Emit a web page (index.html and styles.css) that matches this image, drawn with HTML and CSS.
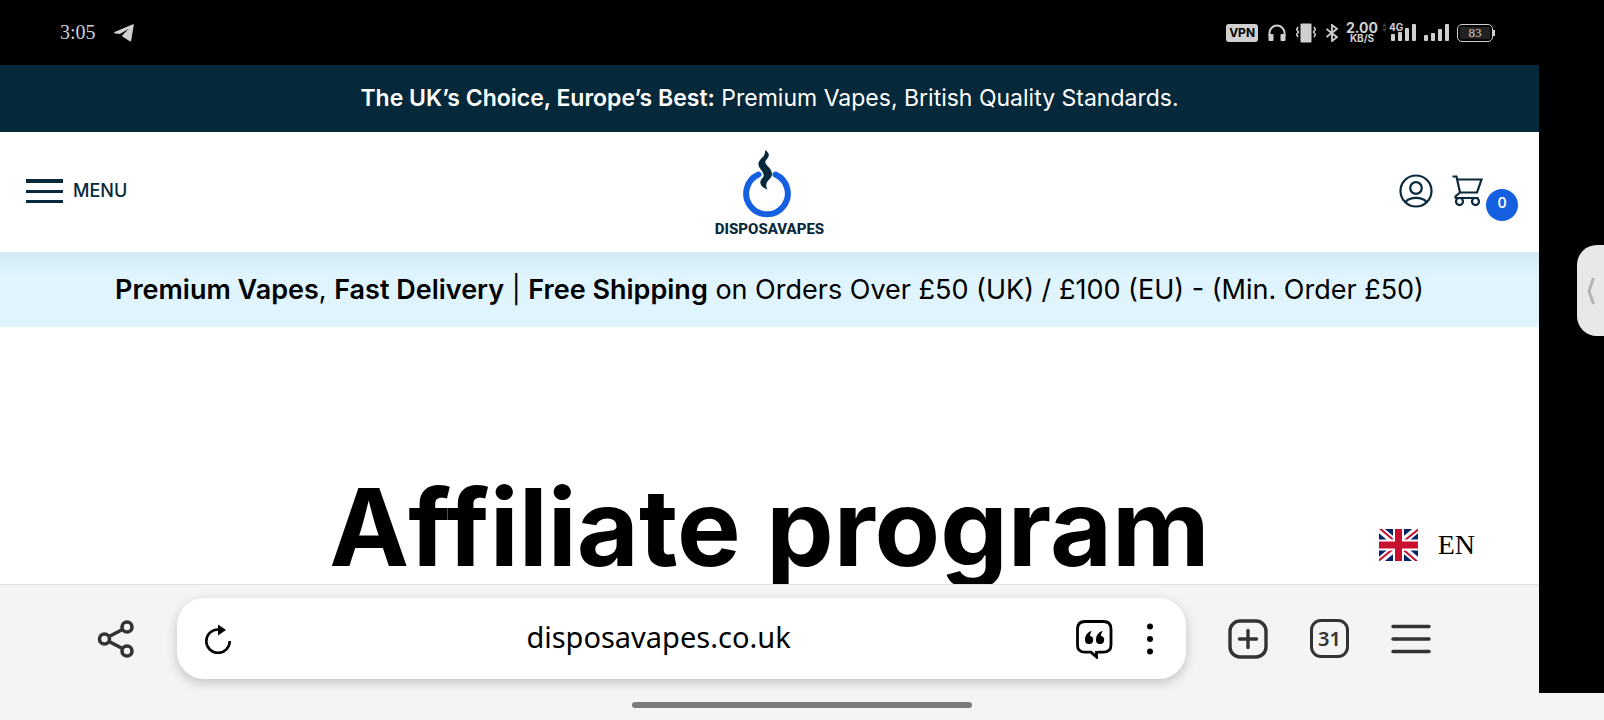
FILE: index.html
```html
<!DOCTYPE html>
<html lang="en">
<head>
    <meta charset="UTF-8">
    <meta name="viewport" content="width=device-width, initial-scale=1.0">
    <title>Affiliate program - Disposavapes</title>
    <link rel="stylesheet" href="styles.css">
</head>
<body>
    <div class="status-bar">
        <div class="status-left">
            <span class="clock">3:05</span>
            <svg width="20" height="18" viewBox="0 0 20 18" fill="#d0d0d0"><path d="M0.5 8 L19 0.3 C19.6 0 20 0.4 19.8 1 L17.2 16.5 C17 17.400 16.200 17.600 15.400 17 L8.400 12.500 C8 12 8.200 11.500 8.600 11 L14.500 5 L5.800 9.900 L1 9.400 C0 9 0 8.300 0.500 8Z"/></svg>
        </div>
        <div class="status-right">
            <div class="status-icons">
                <span class="vpn">VPN</span>
                <svg width="18" height="18" viewBox="0 0 18 18"><path d="M1.500 12V9a7.500 7.500 0 0 1 15 0v3" fill="none" stroke="#d0d0d0" stroke-width="2"/><rect x="0.500" y="10" width="5" height="7" rx="1" fill="#d0d0d0"/><rect x="12.500" y="10" width="5" height="7" rx="1" fill="#d0d0d0"/></svg>
                <svg width="20" height="20" viewBox="0 0 20 20"><rect x="4.500" y="0.500" width="11" height="19" rx="1" fill="#d0d0d0"/><path d="M2 4L0.500 6.500 2.500 9 0.500 11.500 2 14M18 4l1.500 2.500-2 2.500 2 2.500L18 14" fill="none" stroke="#d0d0d0" stroke-width="1.500"/></svg>
                <svg width="12" height="18" viewBox="0 0 12 18" fill="none" stroke="#d0d0d0" stroke-width="1.800"><path d="M0.500 5L11 13.200 6 17V1l5 3.800L0.500 13"/></svg>
            </div>
            <div class="network">
                <div class="speed"><span class="speed-value">2.00</span><span class="speed-unit">KB/S</span></div>
                <svg class="arrows" width="5" height="9" viewBox="0 0 5 9" fill="#3a3a3a"><path d="M0 3.500L2.500 0 5 3.500ZM0 5.500L2.500 9 5 5.500Z"/></svg>
                <div class="signal">
                    <span class="network-type">4G</span>
                    <svg width="25" height="17" viewBox="0 0 25 17" fill="#d0d0d0"><rect x="0" y="10" width="4" height="7" rx="1"/><rect x="7" y="8" width="4" height="9" rx="1"/><rect x="14" y="4" width="4" height="13" rx="1"/><rect x="21" y="0" width="4" height="17" rx="1"/></svg>
                </div>
            </div>
            <svg width="25" height="17" viewBox="0 0 25 17" fill="#d0d0d0"><rect x="0" y="11" width="4" height="6" rx="1"/><rect x="7" y="9" width="4" height="8" rx="1"/><rect x="14" y="5" width="4" height="12" rx="1"/><rect x="21" y="0" width="4" height="17" rx="1"/></svg>
            <div class="battery"><span>83</span></div>
        </div>
    </div>

    <div class="screen">
        <div class="browser">
            <main class="page">
                <div class="promo"><p><strong>The UK’s Choice, Europe’s Best:</strong> Premium Vapes, British Quality Standards.</p></div>
                <header class="header">
                    <button class="menu-btn" type="button">
                        <svg width="37" height="24" viewBox="0 0 37 24" fill="#08283b"><rect width="37" height="4"/><rect y="11" width="37" height="3"/><rect y="21" width="37" height="3"/></svg>
                        MENU
                    </button>
                    <a class="logo" href="#">
                        <svg width="54" height="68" viewBox="0 0 54 68">
                            <path d="M15.500 24.500 A20.800 20.800 0 1 0 32.500 24.500" fill="none" stroke="#1560e0" stroke-width="6" stroke-linecap="round"/>
                            <path d="M22 0 C28 4 26 7 22.500 11 C20.500 14 29 18 29 24 C29 30 20 31 24.500 39.500 C17 37 15.500 32 19.500 28 C24 23 14.500 19 15.500 13.500 C16.500 8 23 7 22 0Z" fill="#08283b"/>
                        </svg>
                        <span>DISPOSAVAPES</span>
                    </a>
                    <div class="header-actions">
                        <a class="account" href="#" aria-label="Account">
                            <svg width="34" height="34" viewBox="0 0 34 34" fill="none" stroke="#08283b" stroke-width="2.200"><circle cx="17" cy="17" r="15.500"/><circle cx="17" cy="14" r="5.800"/><path d="M6.500 28C9 24.700 13 23.800 17 23.800S25 24.700 27.500 28"/></svg>
                        </a>
                        <a class="cart" href="#" aria-label="Cart">
                            <svg width="31" height="31" viewBox="0 0 31 31" fill="none" stroke="#08283b" stroke-width="2.200"><path d="M0.500 1.500H4.500L8 17.500M5.500 4.500H29.500L25 17.500H8L4 21C2.800 22.500 3.500 23 5 23H26.500"/><circle cx="7.500" cy="26.500" r="3.500"/><circle cx="23.500" cy="26.500" r="3.500"/></svg>
                            <span class="cart-count">0</span>
                        </a>
                    </div>
                </header>
                <div class="shipping"><p><strong>Premium Vapes</strong>, <strong>Fast Delivery</strong> | <strong>Free Shipping</strong> on Orders Over £50 (UK) / £100 (EU) - (Min. Order £50)</p></div>
                <h1>Affiliate program</h1>
                <button class="language" type="button">
                    <svg width="39" height="32" viewBox="0 0 39 32">
                        <rect width="39" height="32" fill="#012169"/>
                        <path d="M-2 -2L41 34M41 -2L-2 34" stroke="#fff" stroke-width="7"/>
                        <path d="M-2 -3L19 15M41 -1L20 16M41 35L20 17M-2 33L19 16" stroke="#c8102e" stroke-width="2"/>
                        <path d="M19.500 0V32M0 16H39" stroke="#fff" stroke-width="11"/>
                        <path d="M19.500 0V32M0 16H39" stroke="#c8102e" stroke-width="7"/>
                    </svg>
                    EN
                </button>
            </main>

            <nav class="toolbar">
                <button type="button" aria-label="Share">
                    <svg width="38" height="38" viewBox="0 0 38 38" fill="none" stroke="#333" stroke-width="3.600"><circle cx="7.500" cy="19" r="5"/><circle cx="30" cy="7" r="5"/><circle cx="30" cy="31" r="5"/><path d="M12 16.500L25.500 9.500M12 21.500L25.500 28.500"/></svg>
                </button>
                <div class="address">
                    <button type="button" aria-label="Reload">
                        <svg width="28" height="30" viewBox="0 0 28 30"><path d="M14 5.500A11.700 11.700 0 1 0 25.700 17" fill="none" stroke="#000" stroke-width="2.600"/><path d="M14 0.500L22 6 14 11.500Z"/></svg>
                    </button>
                    <input type="text" value="disposavapes.co.uk" aria-label="Address">
                    <button type="button" aria-label="Reviews">
                        <svg width="38" height="40" viewBox="0 0 38 40"><path d="M23 33.200H28Q36 33.200 36 26V10Q36 2.500 28.500 2.500H10Q2.500 2.500 2.500 10V26Q2.500 33.200 10 33.200H16L21.500 38V32" fill="none" stroke="#000" stroke-width="2.800"/><path d="M17 12C13.500 12.500 10 15.500 10 21A4.100 4.100 0 1 0 15 17C15 14.500 16 13 17 12ZM28 12C24.500 12.500 21 15.500 21 21A4.100 4.100 0 1 0 26 17C26 14.500 27 13 28 12Z"/></svg>
                    </button>
                    <button type="button" aria-label="More">
                        <svg width="6" height="32" viewBox="0 0 6 32"><circle cx="3" cy="3.500" r="3"/><circle cx="3" cy="16" r="3"/><circle cx="3" cy="28.500" r="3"/></svg>
                    </button>
                </div>
                <div class="tools">
                    <button type="button" aria-label="New tab">
                        <svg width="40" height="40" viewBox="0 0 40 40" fill="none" stroke="#333" stroke-width="3.400"><rect x="2" y="2" width="36" height="36" rx="10"/><path d="M11.500 20H28.500M20 11.500V28.500" stroke-linecap="round"/></svg>
                    </button>
                    <button type="button" class="tabs" aria-label="31 open tabs">31</button>
                    <button type="button" aria-label="Browser menu">
                        <svg width="40" height="30" viewBox="0 0 40 30" stroke="#333" stroke-width="3.500" stroke-linecap="round"><path d="M2 2.500H38M2 15H38M2 27.500H38"/></svg>
                    </button>
                </div>
            </nav>
        </div>
        <aside class="edge">
            <button class="handle" type="button" aria-label="Open side panel">
                <svg width="8" height="28" viewBox="0 0 8 28" fill="none" stroke="#b5b5b5" stroke-width="3"><path d="M6.500 1L2 14 6.500 27"/></svg>
            </button>
        </aside>
    </div>
    <div class="gesture"><span></span></div>
</body>
</html>
```
FILE: styles.css
```css
* {
    box-sizing: border-box;
}
body {
    margin: 0;
    height: 100vh;
    display: flex;
    flex-direction: column;
    overflow: hidden;
    background: #f4f4f4;
    color: #000;
    font-family: Inter, sans-serif;
}
p, h1 {
    margin: 0;
}
svg {
    display: block;
    flex-shrink: 0;
}
button {
    display: flex;
    align-items: center;
    padding: 0;
    border: none;
    background: none;
    color: inherit;
    font: inherit;
    cursor: pointer;
}
a {
    color: inherit;
    text-decoration: none;
}

/* phone status bar */
.status-bar {
    display: flex;
    align-items: center;
    justify-content: space-between;
    height: 65px;
    padding: 0 111px 0 60px;
    background: #000;
    color: #d0d0d0;
}
.status-left, .status-right, .status-icons, .network {
    display: flex;
    align-items: center;
}
.status-left {
    gap: 18px;
}
.status-right {
    gap: 8px;
}
.status-icons {
    gap: 10px;
}
.network {
    gap: 4px;
}
.clock {
    font-family: "Liberation Serif", serif;
    font-size: 20px;
}
.vpn {
    padding: 0 3px;
    border-radius: 3px;
    background: #d0d0d0;
    color: #000;
    font-size: 12px;
    font-weight: 700;
    line-height: 18px;
}
.speed {
    display: flex;
    flex-direction: column;
    align-items: center;
    font-weight: 700;
}
.speed-value {
    font-size: 14px;
    line-height: 12px;
}
.speed-unit {
    font-size: 10px;
    line-height: 9px;
}
.arrows {
    margin-bottom: 10px;
}
.signal {
    position: relative;
}
.network-type {
    position: absolute;
    left: -2px;
    top: -2px;
    background: #000;
    font-size: 10px;
    font-weight: 700;
    line-height: 10px;
}
.battery {
    position: relative;
    width: 36px;
    padding: 2px;
    border: 1px solid #d0d0d0;
    border-radius: 5px;
    font-family: "Liberation Serif", serif;
    font-size: 13px;
    line-height: 12px;
    text-align: center;
}
.battery span {
    display: block;
    background: #222;
}
.battery::after {
    content: "";
    position: absolute;
    right: -3px;
    top: 5px;
    width: 2px;
    height: 6px;
    background: #d0d0d0;
}

.screen {
    flex: 1;
    display: flex;
    min-height: 0;
}
.browser {
    flex: 1;
    display: flex;
    flex-direction: column;
    min-width: 0;
}

/* web page */
.page {
    position: relative;
    flex: 1;
    min-height: 0;
    overflow: hidden;
    background: #fff;
    text-align: center;
}
.promo {
    padding: 16px;
    background: #05283b;
    color: #fff;
    font-size: 23px;
    line-height: 35px;
}
.promo strong, .shipping strong {
    font-weight: 600;
}
.header {
    display: grid;
    grid-template-columns: 1fr auto 1fr;
    align-items: center;
    height: 120px;
    padding: 0 21px 3px;
    background: #fff;
    color: #08283b;
}
.menu-btn {
    gap: 10px;
    padding-left: 5px;
    font-size: 18px;
    font-weight: 500;
}
.logo {
    display: flex;
    flex-direction: column;
    align-items: center;
    padding-top: 7px;
    font-family: Roboto, sans-serif;
    font-size: 15px;
    font-weight: 800;
    line-height: 18px;
}
.logo svg {
    margin-bottom: 2px;
}
.header-actions {
    display: flex;
    align-items: center;
    justify-content: flex-end;
    gap: 19px;
}
.cart {
    display: flex;
    align-items: center;
    gap: 3px;
}
.cart-count {
    margin-top: 28px;
    width: 32px;
    border-radius: 50%;
    background: #1560e0;
    color: #fff;
    font-size: 14px;
    font-weight: 600;
    line-height: 28px;
    padding-bottom: 4px;
}
.shipping {
    padding: 16px;
    background: linear-gradient(#d3eaf1, #dff4fd 24px);
    font-size: 27px;
    line-height: 43px;
}
h1 {
    padding-top: 132px;
    font-size: 107px;
    font-weight: 700;
    line-height: 136px;
    white-space: nowrap;
}
.language {
    position: absolute;
    right: 64px;
    bottom: 23px;
    gap: 20px;
    font-family: "Liberation Serif", serif;
    font-size: 28px;
    line-height: 32px;
}

/* browser toolbar */
.toolbar {
    display: flex;
    align-items: center;
    gap: 42px;
    padding: 13px 108px 14px 97px;
    border-top: 1px solid #e0e0e0;
    color: #333;
}
.address {
    flex: 1;
    display: flex;
    align-items: center;
    gap: 34px;
    height: 81px;
    padding: 0 33px 0 27px;
    border-radius: 27px;
    background: #fff;
    box-shadow: 0 4px 12px rgba(0,0,0,0.2);
}
.address input {
    flex: 1;
    min-width: 0;
    padding: 0 0 4px 10px;
    border: none;
    outline: none;
    background: none;
    color: #000;
    font-family: "Noto Sans", sans-serif;
    font-size: 29px;
    text-align: center;
}
.tools {
    display: flex;
    align-items: center;
    gap: 42px;
}
.tabs {
    justify-content: center;
    width: 39px;
    height: 39px;
    border: 3px solid #333;
    border-radius: 11px;
    font-family: "Noto Sans", sans-serif;
    font-size: 20px;
    font-weight: 600;
}

/* black strip beside the browser */
.edge {
    display: flex;
    justify-content: flex-end;
    align-items: flex-start;
    width: 65px;
    padding-top: 180px;
    background: #000;
}
.handle {
    justify-content: center;
    width: 27px;
    height: 91px;
    border-radius: 20px 0 0 20px;
    background: #e8e8e8;
}

.gesture {
    display: flex;
    justify-content: center;
    padding: 9px 0 12px;
}
.gesture span {
    width: 340px;
    height: 6px;
    border-radius: 3px;
    background: #7b7b7b;
}
```
